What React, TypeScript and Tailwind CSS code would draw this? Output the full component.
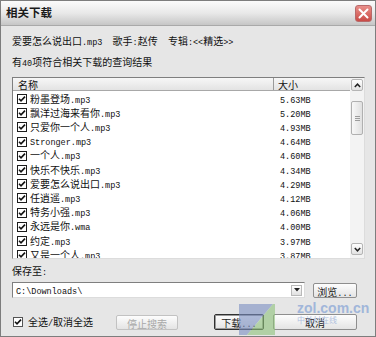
import React from 'react';

const files = [
  { name: '粉墨登场.mp3', size: '5.63MB' },
  { name: '飘洋过海来看你.mp3', size: '5.20MB' },
  { name: '只爱你一个人.mp3', size: '4.93MB' },
  { name: 'Stronger.mp3', size: '4.64MB' },
  { name: '一个人.mp3', size: '4.60MB' },
  { name: '快乐不快乐.mp3', size: '4.34MB' },
  { name: '爱要怎么说出口.mp3', size: '4.29MB' },
  { name: '任逍遥.mp3', size: '4.12MB' },
  { name: '特务小强.mp3', size: '4.06MB' },
  { name: '永远是你.wma', size: '4.00MB' },
  { name: '约定.mp3', size: '3.97MB' },
  { name: '又是一个人.mp3', size: '3.87MB' },
];

// ascii runs look like the old bitmap font: narrow, monospaced
function T({ s }: { s: string }) {
  const parts = s.split(/([\x00-\x7f]+)/).filter(Boolean);
  return (
    <span className="whitespace-pre">
      {parts.map((p, i) =>
        /^[\x00-\x7f]+$/.test(p) ? (
          <span key={i} className="[font-family:'Liberation_Mono',monospace] text-[8.5px]">{p}</span>
        ) : (
          <span key={i}>{p}</span>
        )
      )}
    </span>
  );
}

function Check({ className = '' }: { className?: string }) {
  return (
    <span className={`grid h-[10px] w-[10px] shrink-0 place-items-center border border-[#1d1d1d] bg-white ${className}`}>
      <svg width="8" height="8" viewBox="0 0 8 8">
        <path d="M1 3.8 L3 5.8 L7 1.6" fill="none" stroke="#111" strokeWidth="1.6" />
      </svg>
    </span>
  );
}

function Btn({ children, className = '', disabled = false, primary = false }: { children: React.ReactNode; className?: string; disabled?: boolean; primary?: boolean }) {
  return (
    <div
      className={`grid place-items-center rounded-[2px] border bg-gradient-to-b from-[#fdfdfd] to-[#e4e4e4] ${
        primary ? 'border-[#303030] shadow-[inset_0_0_0_1px_#9a9a9a]' : 'border-[#8e8e8e]'
      } ${disabled ? 'text-[#a8a8a8]' : 'text-[#1a1a1a]'} ${className}`}
    >
      {children}
    </div>
  );
}

function ScrollArrow({ up }: { up: boolean }) {
  return (
    <div className="grid h-[12px] w-[12px] place-items-center rounded-[2px] border border-[#b5b5b5] bg-gradient-to-b from-white to-[#e2e2e2]">
      <svg width="7" height="5" viewBox="0 0 7 5">
        <path d={up ? 'M0.8 4 L3.5 1.2 L6.2 4' : 'M0.8 1 L3.5 3.8 L6.2 1'} fill="none" stroke="#222" strokeWidth="1.5" />
      </svg>
    </div>
  );
}

export default function App() {
  return (
    <div className="relative flex h-[337px] w-[376px] flex-col overflow-hidden border border-[#7d7d7d] bg-[#e6e6e6] text-[10px] text-[#111] [font-family:'Noto_Sans_CJK_SC',sans-serif]">
      {/* title bar */}
      <div className="flex h-[25px] shrink-0 items-center justify-between border-b border-[#a9a9a9] bg-gradient-to-b from-[#fbfbfb] via-[#e9e9e9] to-[#c6c6c6] pl-[5px] pr-[3px]">
        <span className="text-[11.5px] font-bold text-[#1a1a1a]">相关下载</span>
        <div className="grid h-[17px] w-[17px] place-items-center rounded-[3px] border border-[#b86a6a] bg-gradient-to-b from-[#e98f8a] to-[#c94a46]">
          <svg width="11" height="11" viewBox="0 0 11 11">
            <path d="M1.5 1.5 L9.5 9.5 M9.5 1.5 L1.5 9.5" stroke="white" strokeWidth="2" strokeLinecap="round" />
          </svg>
        </div>
      </div>

      <div className="flex flex-1 flex-col px-[11px]">
        <div className="mt-[8px] flex h-[14px] items-center">
          <T s="爱要怎么说出口.mp3  歌手:赵传  专辑:<<精选>>" />
        </div>
        <div className="mt-[7px] flex h-[14px] items-center">
          <T s="有40项符合相关下载的查询结果" />
        </div>

        {/* list box */}
        <div className="mt-[8px] flex h-[182px] w-[353px] overflow-hidden border border-[#7f7f7f] border-r-[#dcdcdc] border-b-[#dcdcdc] bg-white">
          <div className="flex flex-1 flex-col overflow-hidden">
            <div className="flex h-[13px] shrink-0 items-center border-b border-[#a8a8a8] bg-gradient-to-b from-[#f7f7f7] to-[#e3e3e3]">
              <div className="flex h-full w-[261px] items-center border-r border-[#9a9a9a] pl-[5px]">名称</div>
              <div className="flex h-full flex-1 items-center pl-[4px]">大小</div>
            </div>
            <div className="pt-[1px]">
              {files.map((f) => (
                <div key={f.name} className="flex h-[14.2px] items-center">
                  <div className="flex w-[262px] items-center gap-[3px] pl-[4px]">
                    <Check />
                    <T s={f.name} />
                  </div>
                  <div className="pl-[5px]">
                    <T s={f.size} />
                  </div>
                </div>
              ))}
            </div>
          </div>
          {/* scrollbar */}
          <div className="flex w-[14px] shrink-0 flex-col items-center justify-between bg-[#f3f3f3] py-[1px]">
            <div className="flex flex-col items-center">
              <ScrollArrow up />
              <div className="mt-[10px] flex h-[34px] w-[12px] flex-col items-center justify-center gap-[1px] rounded-[2px] border border-[#b0b0b0] bg-gradient-to-r from-[#f8f8f8] to-[#e0e0e0]">
                <span className="h-px w-[5px] bg-[#9c9c9c]" />
                <span className="h-px w-[5px] bg-[#9c9c9c]" />
                <span className="h-px w-[5px] bg-[#9c9c9c]" />
              </div>
            </div>
            <div className="mb-[2px]">
              <ScrollArrow up={false} />
            </div>
          </div>
        </div>

        <div className="mt-[5px] flex h-[15px] items-center">
          <T s="保存至:" />
        </div>
        <div className="mt-[3px] flex h-[16px] items-center">
          <div className="flex h-[16px] w-[293px] items-center border border-[#7f7f7f] border-r-[#dcdcdc] border-b-[#dcdcdc] bg-white pl-[3px]">
            <span className="flex-1">
              <T s="C:\Downloads\" />
            </span>
            <div className="mr-[2px] grid h-[11px] w-[11px] place-items-center border border-[#b9b9b9] bg-gradient-to-b from-white to-[#e0e0e0]">
              <svg width="6" height="4" viewBox="0 0 6 4">
                <path d="M0 0 H6 L3 3.5 Z" fill="#222" />
              </svg>
            </div>
          </div>
          <Btn className="ml-[8px] h-[15px] w-[44px]">
            <T s="浏览..." />
          </Btn>
        </div>

        <div className="mt-[16px] flex h-[16px] items-center">
          <div className="flex w-[104px] items-center gap-[5px] pl-[1px]">
            <Check className="border-[#555]" />
            <T s="全选/取消全选" />
          </div>
          <Btn disabled className="h-[15px] w-[62px] border-[#c2c2c2]">停止搜索</Btn>
          <Btn primary className="ml-[36px] h-[16px] w-[50px]">
            <T s="下载..." />
          </Btn>
          <Btn className="ml-[9px] h-[16px] w-[84px]">取消</Btn>
        </div>
      </div>

      {/* watermark */}
      <div className="pointer-events-none absolute left-[236px] top-[300px] flex items-start gap-[20px] opacity-75">
        <svg width="40" height="37" viewBox="0 0 40 37">
          <path d="M2 3 H36 L10 34 H2 Z" fill="#7a8fc2" opacity="0.8" />
          <path d="M36 3 H38 V34 H10 Z" fill="#8fc27a" opacity="0.8" />
        </svg>
        <div className="flex flex-col leading-none">
          <span className="text-[14px] font-bold text-[#8aa6d6] [font-family:'Liberation_Sans',sans-serif]">zol.com.cn</span>
          <span className="mt-[1px] text-[8px] text-[#9ab0d8]">中关村在线</span>
        </div>
      </div>
    </div>
  );
}
